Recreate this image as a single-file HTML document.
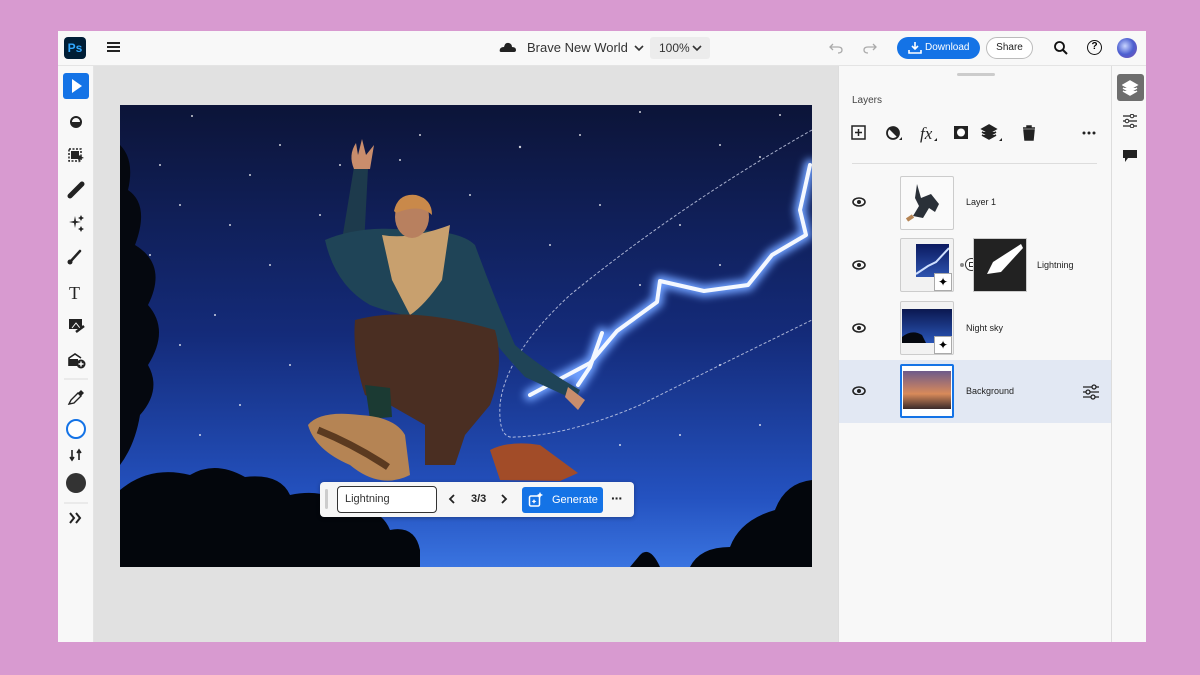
<!DOCTYPE html>
<html><head><meta charset="utf-8"><style>
*{box-sizing:border-box;margin:0;padding:0}
body{width:1200px;height:675px;background:#d89ad0;font-family:"Liberation Sans",sans-serif;position:relative;overflow:hidden}
.frame{position:absolute;left:58px;top:31px;width:1088px;height:611px;background:#e1e1e1;overflow:hidden}
.top{position:absolute;left:0;top:0;width:1088px;height:35px;background:#f8f8f8;border-bottom:1px solid #e4e4e4}
.left{position:absolute;left:0;top:35px;width:36px;height:576px;background:#f8f8f8;border-right:1px solid #e4e4e4}
.panel{position:absolute;left:780px;top:35px;width:273px;height:576px;background:#f8f8f8;border-left:1px solid #ddd}
.rbar{position:absolute;left:1053px;top:35px;width:35px;height:576px;background:#f8f8f8;border-left:1px solid #ddd}
.abs{position:absolute}
.t{position:absolute;font-size:10px;color:#222}
</style></head><body>
<div class="frame">
 <div class="top">
  <div class="abs" style="left:6px;top:6px;width:22px;height:22px;background:#001e36;border-radius:4px;color:#31a8ff;font-weight:bold;font-size:12px;line-height:22px;text-align:center">Ps</div>
  <div class="abs" style="left:49px;top:11px;width:13px;height:2px;background:#222;box-shadow:0 4px 0 #222,0 8px 0 #222"></div>
  <svg class="abs" style="left:441px;top:10px" width="18" height="12"><path d="M2 11 Q0 11 1 8 Q2 6 5 6 Q6 1 10 2 Q13 3 13 6 Q17 6 17 9 Q17 11 15 11Z" fill="#222"/></svg>
  <div class="t" style="left:469px;top:9px;font-size:13px;color:#333">Brave New World</div>
  <svg class="abs" style="left:576px;top:13px" width="10" height="8"><path d="M1 2 L5 6 L9 2" stroke="#333" stroke-width="1.6" fill="none"/></svg>
  <div class="abs" style="left:592px;top:6px;width:60px;height:22px;background:#ececec;border-radius:3px"></div>
  <div class="t" style="left:601px;top:10px;font-size:12px;color:#333">100%</div>
  <svg class="abs" style="left:634px;top:13px" width="10" height="8"><path d="M1 2 L5 6 L9 2" stroke="#333" stroke-width="1.6" fill="none"/></svg>
  <svg class="abs" style="left:770px;top:10px" width="60" height="14"><path d="M5 3 L2 6 L5 9 M2 6 H10 Q14 6 14 9 Q14 12 10 12" stroke="#aaa" stroke-width="1.3" fill="none"/><path d="M45 3 L48 6 L45 9 M48 6 H40 Q36 6 36 9 Q36 12 40 12" stroke="#aaa" stroke-width="1.3" fill="none"/></svg>
  <div class="abs" style="left:839px;top:6px;width:83px;height:22px;background:#1473e6;border-radius:11px;color:#fff;font-size:10px;line-height:22px;padding-left:28px">Download</div>
  <svg class="abs" style="left:850px;top:10px" width="14" height="14"><path d="M7 1 V8 M4 5 L7 8 L10 5 M1 9 V12 H13 V9" stroke="#fff" stroke-width="1.6" fill="none"/></svg>
  <div class="abs" style="left:928px;top:6px;width:47px;height:22px;border:1.5px solid #bbb;border-radius:11px;font-size:10px;line-height:19px;text-align:center;color:#222;background:#fff">Share</div>
  <svg class="abs" style="left:995px;top:9px" width="16" height="16"><circle cx="6.5" cy="6.5" r="4.5" stroke="#111" stroke-width="1.8" fill="none"/><path d="M10 10 L14 14" stroke="#111" stroke-width="2"/></svg>
  <div class="abs" style="left:1029px;top:9px;width:15px;height:15px;border:1.7px solid #111;border-radius:50%;font-size:10px;font-weight:bold;text-align:center;line-height:12px">?</div>
  <div class="abs" style="left:1059px;top:7px;width:20px;height:20px;border-radius:50%;background:radial-gradient(circle at 40% 40%,#c8d4ff,#4c5fd0 50%,#7a4fb0)"></div>
 </div>
 <div class="left">
  <div class="abs" style="left:5px;top:7px;width:26px;height:26px;background:#1473e6;border-radius:3px"></div>
  <svg class="abs" style="left:0;top:0" width="36" height="480">
   <path d="M14 13 L24 20 L14 27Z" fill="#fff"/>
   <circle cx="18" cy="56" r="5" fill="none" stroke="#222" stroke-width="2"/><path d="M13 56 A5 5 0 0 0 23 56Z" fill="#222"/>
   <rect x="11" y="83" width="12" height="12" fill="none" stroke="#222" stroke-width="1.5" stroke-dasharray="2 1.5"/><rect x="13" y="85" width="8" height="8" fill="#222"/><path d="M19 88 L26 92 L22 93 L21 97Z" fill="#222"/>
   <path d="M12 130 L24 118" stroke="#222" stroke-width="5" stroke-linecap="round"/>
   <path d="M17 150 L18 155 L23 156 L18 157 L17 162 L16 157 L11 156 L16 155Z M23 149 l1 2 2 1 -2 1 -1 2 -1 -2 -2 -1 2 -1Z M23 160 l1 2 2 1 -2 1 -1 2 -1 -2 -2 -1 2 -1Z" fill="#222"/>
   <path d="M12 196 L22 185" stroke="#222" stroke-width="2.5" stroke-linecap="round"/><circle cx="12" cy="196" r="2.5" fill="#222"/>
   <text x="11" y="233" font-family="Liberation Serif" font-size="18" fill="#222">T</text>
   <rect x="11" y="253" width="13" height="10" fill="#222"/><path d="M14 262 L18 257 L22 262" stroke="#fff" fill="none"/><path d="M18 266 L26 260" stroke="#222" stroke-width="2.5"/>
   <path d="M11 300 V292 L17 288 L23 292" stroke="#222" stroke-width="1.6" fill="#fff"/><rect x="11" y="293" width="9" height="7" fill="#222"/><circle cx="23" cy="298" r="4.5" fill="#222"/><path d="M23 295.5 V300.5 M20.5 298 H25.5" stroke="#fff" stroke-width="1.4"/>
   <path d="M6 313 H30" stroke="#ddd"/>
   <path d="M11 338 L13 334 L20 327 L23 330 L16 337Z" fill="none" stroke="#222" stroke-width="1.4"/><path d="M20 327 L23 324 L26 327 L23 330" fill="#222"/>
   <circle cx="18" cy="363" r="9" fill="#fff" stroke="#1473e6" stroke-width="2"/>
   <path d="M14 384 V394 M12 391 L14 394 L16 391 M21 394 V384 M19 387 L21 384 L23 387" stroke="#222" stroke-width="1.6" fill="none"/>
   <circle cx="18" cy="417" r="10" fill="#333"/>
   <path d="M6 437 H30" stroke="#ddd"/>
   <path d="M12 447 L16 452 L12 457 M18 447 L22 452 L18 457" stroke="#222" stroke-width="2" fill="none"/>
  </svg>
 </div>
 <!-- canvas -->
 <svg class="abs" style="left:62px;top:74px" width="692" height="462" viewBox="0 0 692 462">
  <defs>
   <linearGradient id="sky" x1="0" y1="0" x2="0" y2="1"><stop offset="0" stop-color="#0c1438"/><stop offset=".5" stop-color="#142b7a"/><stop offset=".85" stop-color="#2452c0"/><stop offset="1" stop-color="#3a74e0"/></linearGradient>
   <filter id="glow" x="-20%" y="-20%" width="140%" height="140%"><feGaussianBlur stdDeviation="4"/></filter>
  </defs>
  <rect width="692" height="462" fill="url(#sky)"/>
  <g fill="#fff" opacity=".8">
   <circle cx="72" cy="11" r="1"/><circle cx="160" cy="40" r="1"/><circle cx="220" cy="60" r="1"/><circle cx="280" cy="55" r="1"/><circle cx="400" cy="42" r="1.2"/><circle cx="460" cy="30" r="1"/><circle cx="520" cy="7" r="1"/><circle cx="600" cy="40" r="1"/><circle cx="640" cy="52" r="1"/><circle cx="60" cy="100" r="1"/><circle cx="110" cy="120" r="1"/><circle cx="30" cy="150" r="1"/><circle cx="150" cy="160" r="1"/><circle cx="95" cy="210" r="1"/><circle cx="60" cy="240" r="1"/><circle cx="170" cy="260" r="1"/><circle cx="120" cy="300" r="1"/><circle cx="80" cy="330" r="1"/><circle cx="480" cy="100" r="1"/><circle cx="560" cy="120" r="1"/><circle cx="430" cy="140" r="1"/><circle cx="600" cy="160" r="1"/><circle cx="520" cy="180" r="1"/><circle cx="600" cy="260" r="1"/><circle cx="640" cy="320" r="1"/><circle cx="560" cy="330" r="1"/><circle cx="500" cy="340" r="1"/><circle cx="300" cy="30" r="1"/><circle cx="350" cy="90" r="1"/><circle cx="200" cy="110" r="1"/><circle cx="130" cy="70" r="1"/><circle cx="660" cy="10" r="1"/><circle cx="40" cy="60" r="1"/>
  </g>
  <!-- trees -->
  <path d="M0 40 Q15 55 8 85 Q30 100 15 140 Q48 160 28 200 Q50 225 28 260 Q42 285 20 310 Q15 340 0 360Z" fill="#05080f"/>
  <path d="M0 385 Q30 360 70 370 Q95 355 125 372 Q160 368 170 390 Q210 382 225 405 Q260 400 270 425 Q295 420 300 445 L300 462 L0 462Z" fill="#03060c"/>
  <path d="M692 375 Q665 378 655 405 Q620 415 610 442 Q580 442 570 462 L692 462Z" fill="#03060c"/>
  <path d="M520 450 Q530 440 540 462 L510 462Z" fill="#03060c"/>
  <!-- selection dashes -->
  <path d="M692 25 Q560 100 450 190 Q385 250 380 300 Q378 335 395 332 Q450 330 520 300 Q600 260 692 215" stroke="#cfd6ee" stroke-width="1" stroke-dasharray="3 2" fill="none" opacity=".8"/>
  <!-- lightning -->
  <g stroke-linejoin="round" stroke-linecap="round" fill="none">
   <path d="M690 60 L680 105 L686 130 L652 150 L628 180 L584 186 L540 176 L537 197 L497 226 L470 258 L410 290 M482 228 L470 262 L458 280" stroke="#6fa0ff" stroke-width="12" filter="url(#glow)"/>
   <path d="M690 60 L680 105 L686 130 L652 150 L628 180 L584 186 L540 176 L537 197 L497 226 L470 258 L410 290 M482 228 L470 262 L458 280" stroke="#f4f8ff" stroke-width="4"/>
  </g>
  <!-- person -->
  <path d="M222 135 L234 62 L248 64 L244 140Z" fill="#1d3a4c"/>
  <path d="M234 64 Q228 50 236 38 L238 50 L242 34 L246 50 L254 40 L250 64Z" fill="#c98d6c"/>
  <path d="M205 135 Q240 120 290 125 Q340 125 355 140 Q375 195 395 240 Q420 262 460 285 L455 295 L405 272 Q380 245 365 225 L330 215 Q290 215 250 200 Q215 180 205 135Z" fill="#1f4457"/>
  <path d="M448 282 L465 295 L458 305 L445 292Z" fill="#c98d6c"/>
  <path d="M262 130 Q290 135 330 120 L322 175 Q305 200 290 210 L272 175Z" fill="#c8a06e"/>
  <ellipse cx="292" cy="112" rx="17" ry="21" fill="#b8805f"/>
  <path d="M274 106 Q278 88 296 90 Q312 94 312 110 Q300 98 276 108Z" fill="#c9894a"/>
  <path d="M235 215 Q290 200 375 225 Q385 260 370 300 L345 330 L335 360 L305 360 L305 320 L270 300 L245 290 Q232 250 235 215Z" fill="#4a2e22"/>
  <path d="M245 280 L270 283 L272 312 L250 314Z" fill="#1b3a33"/>
  <path d="M188 320 Q200 305 240 310 Q275 312 285 330 L290 370 Q260 385 230 360 Q195 345 188 320Z" fill="#b58454"/>
  <path d="M198 325 Q235 340 268 362" stroke="#5b3a20" stroke-width="7" fill="none"/>
  <path d="M370 345 Q390 335 420 340 L458 368 L440 376 L380 375Z" fill="#a24c28"/>
 </svg>
 <!-- generate bar -->
 <div class="abs" style="left:262px;top:451px;width:314px;height:35px;background:#f6f6f6;border-radius:4px;box-shadow:0 1px 4px rgba(0,0,0,.3)"></div>
 <div class="abs" style="left:267px;top:458px;width:3px;height:20px;background:#ccc;border-radius:2px"></div>
 <div class="abs" style="left:279px;top:455px;width:100px;height:27px;border:1.5px solid #333;border-radius:4px;background:#fff;font-size:11px;line-height:24px;padding-left:7px;color:#333">Lightning</div>
 <svg class="abs" style="left:390px;top:462px" width="60" height="12"><path d="M6 2 L2 6 L6 10" stroke="#222" stroke-width="1.8" fill="none"/><path d="M54 2 L58 6 L54 10" stroke="#222" stroke-width="1.8" fill="none"/></svg>
 <div class="t" style="left:413px;top:462px;font-size:11px;font-weight:bold">3/3</div>
 <div class="abs" style="left:464px;top:456px;width:81px;height:26px;background:#1473e6;border-radius:3px;color:#fff;font-size:11px;line-height:26px;padding-left:30px">Generate</div>
 <svg class="abs" style="left:470px;top:461px" width="16" height="16"><rect x="1.5" y="4" width="10" height="10" rx="1.5" fill="none" stroke="#fff" stroke-width="1.5"/><path d="M12 0 l1 2 2 1 -2 1 -1 2 -1 -2 -2 -1 2 -1Z M6 7 l.8 1.6 1.6.8 -1.6.8 -.8 1.6 -.8-1.6 -1.6-.8 1.6-.8Z" fill="#fff"/></svg>
 <div class="t" style="left:553px;top:459px;font-size:14px;font-weight:bold;letter-spacing:-1px">···</div>
 <!-- panel -->
 <div class="panel">
  <div class="abs" style="left:118px;top:7px;width:38px;height:3px;background:#ccc;border-radius:2px"></div>
  <div class="t" style="left:13px;top:29px;font-size:10px;color:#444">Layers</div>
  <svg class="abs" style="left:0;top:56px" width="273" height="24">
   <rect x="13" y="4" width="13" height="13" fill="none" stroke="#222" stroke-width="1.5"/><path d="M19.5 7 V14 M16 10.5 H23" stroke="#222" stroke-width="1.5"/>
   <circle cx="54" cy="11" r="6" fill="none" stroke="#222" stroke-width="1.8"/><path d="M54 5 A6 6 0 0 1 58 15 L50 7Z" fill="#222"/><path d="M63 18 L60 18 L63 15Z" fill="#222"/>
   <text x="81" y="17" font-family="Liberation Serif" font-style="italic" font-size="17" fill="#222">fx</text><path d="M98 19 L95 19 L98 16Z" fill="#222"/>
   <rect x="115" y="4" width="14" height="13" fill="#222"/><circle cx="122" cy="10.5" r="4" fill="#fff"/>
   <path d="M150 3 L157 7 L150 11 L143 7Z M143 10 L150 14 L157 10 M143 13 L150 17 L157 13" stroke="#222" stroke-width="1.6" fill="#222"/><path d="M163 19 L160 19 L163 16Z" fill="#222"/>
   <path d="M184 6 H196 M188 6 V4 H192 V6 M185 8 H195 L194 18 H186Z" stroke="#222" stroke-width="1.5" fill="#222"/>
   <circle cx="245" cy="11" r="1.5" fill="#222"/><circle cx="250" cy="11" r="1.5" fill="#222"/><circle cx="255" cy="11" r="1.5" fill="#222"/>
  </svg>
  <div class="abs" style="left:13px;top:97px;width:245px;height:1px;background:#ddd"></div>
  <div class="abs" style="left:0;top:294px;width:273px;height:63px;background:#e2e8f3"></div>
  <svg class="abs" style="left:12px;top:129px" width="16" height="200"><g fill="none" stroke="#222" stroke-width="1.6"><ellipse cx="8" cy="7" rx="6" ry="4"/><ellipse cx="8" cy="70" rx="6" ry="4"/><ellipse cx="8" cy="133" rx="6" ry="4"/><ellipse cx="8" cy="196" rx="6" ry="4"/></g><g fill="#222"><circle cx="8" cy="7" r="2"/><circle cx="8" cy="70" r="2"/><circle cx="8" cy="133" r="2"/><circle cx="8" cy="196" r="2"/></g></svg>
  <!-- thumbs -->
  <div class="abs" style="left:61px;top:110px;width:54px;height:54px;border:1px solid #ccc;background:#fafafa;border-radius:2px"></div>
  <svg class="abs" style="left:66px;top:114px" width="44" height="46"><path d="M12 4 L16 18 L26 14 L34 24 L30 32 L24 28 L18 38 L8 36 L14 26 L10 18Z" fill="#2a3038"/><path d="M8 36 L2 40" stroke="#b58454" stroke-width="4"/></svg>
  <div class="abs" style="left:61px;top:172px;width:54px;height:54px;border:1px solid #ccc;background:#f2f2f2;border-radius:2px"></div>
  <div class="abs" style="left:77px;top:178px;width:33px;height:33px;background:linear-gradient(#0b1a60,#2e54b0)"></div>
  <svg class="abs" style="left:77px;top:178px" width="33" height="33"><path d="M0 30 L12 22 L20 18 L33 4" stroke="#cfe0ff" stroke-width="2" fill="none"/></svg>
  <div class="abs" style="left:95px;top:207px;width:18px;height:18px;background:#fff;border:1px solid #aaa;font-size:12px;line-height:16px;text-align:center">✦</div>
  <div class="abs" style="left:121px;top:197px;width:4px;height:4px;border-radius:50%;background:#888"></div>
  <div class="abs" style="left:126px;top:192px;width:13px;height:13px;border-radius:50%;background:#fff;border:1.5px solid #333"></div>
  <div class="abs" style="left:130px;top:196px;width:5px;height:5px;border:1.5px solid #333"></div>
  <div class="abs" style="left:134px;top:172px;width:54px;height:54px;background:#222;border:1px solid #ccc"></div>
  <svg class="abs" style="left:134px;top:172px" width="54" height="54"><path d="M14 36 L20 24 L48 6 L50 10 L28 34 Z" fill="#fff"/></svg>
  <div class="abs" style="left:61px;top:235px;width:54px;height:54px;border:1px solid #ccc;background:#f2f2f2;border-radius:2px"></div>
  <div class="abs" style="left:63px;top:243px;width:50px;height:34px;background:linear-gradient(#0b1850,#2a56b8)"></div>
  <svg class="abs" style="left:63px;top:243px" width="50" height="34"><path d="M0 28 Q10 20 20 26 L24 34 L0 34Z" fill="#05080f"/></svg>
  <div class="abs" style="left:95px;top:270px;width:18px;height:18px;background:#fff;border:1px solid #aaa;font-size:12px;line-height:16px;text-align:center">✦</div>
  <div class="abs" style="left:61px;top:298px;width:54px;height:54px;border:2px solid #1473e6;background:#fff;border-radius:2px"></div>
  <div class="abs" style="left:64px;top:305px;width:48px;height:38px;background:linear-gradient(#6e5a8a,#d88a5a 60%,#3a2a2a)"></div>
  <div class="t" style="left:127px;top:131px;font-size:9px">Layer 1</div>
  <div class="t" style="left:198px;top:194px;font-size:9px">Lightning</div>
  <div class="t" style="left:127px;top:257px;font-size:9px">Night sky</div>
  <div class="t" style="left:127px;top:320px;font-size:9px">Background</div>
  <svg class="abs" style="left:243px;top:318px" width="18" height="16"><path d="M1 3 H17 M1 8 H17 M1 13 H17" stroke="#222" stroke-width="1.3"/><circle cx="12" cy="3" r="2" fill="#e2e8f3" stroke="#222" stroke-width="1.3"/><circle cx="6" cy="8" r="2" fill="#e2e8f3" stroke="#222" stroke-width="1.3"/><circle cx="11" cy="13" r="2" fill="#e2e8f3" stroke="#222" stroke-width="1.3"/></svg>
 </div>
 <div class="rbar">
  <div class="abs" style="left:5px;top:8px;width:27px;height:27px;background:#6e6e6e;border-radius:3px"></div>
  <svg class="abs" style="left:10px;top:13px" width="18" height="18"><path d="M8 2 L15 6 L8 10 L1 6Z M1 9 L8 13 L15 9 M1 12 L8 16 L15 12" stroke="#fff" stroke-width="1.5" fill="#fff"/></svg>
  <svg class="abs" style="left:10px;top:48px" width="16" height="14"><path d="M1 2 H15 M1 7 H15 M1 12 H15" stroke="#222" stroke-width="1.2"/><circle cx="10" cy="2" r="1.8" fill="#f8f8f8" stroke="#222"/><circle cx="5" cy="7" r="1.8" fill="#f8f8f8" stroke="#222"/><circle cx="10" cy="12" r="1.8" fill="#f8f8f8" stroke="#222"/></svg>
  <svg class="abs" style="left:10px;top:83px" width="16" height="14"><path d="M1 1 H15 V9 H6 L3 13 V9 H1Z" fill="#222"/></svg>
 </div>
</div>
</body></html>
